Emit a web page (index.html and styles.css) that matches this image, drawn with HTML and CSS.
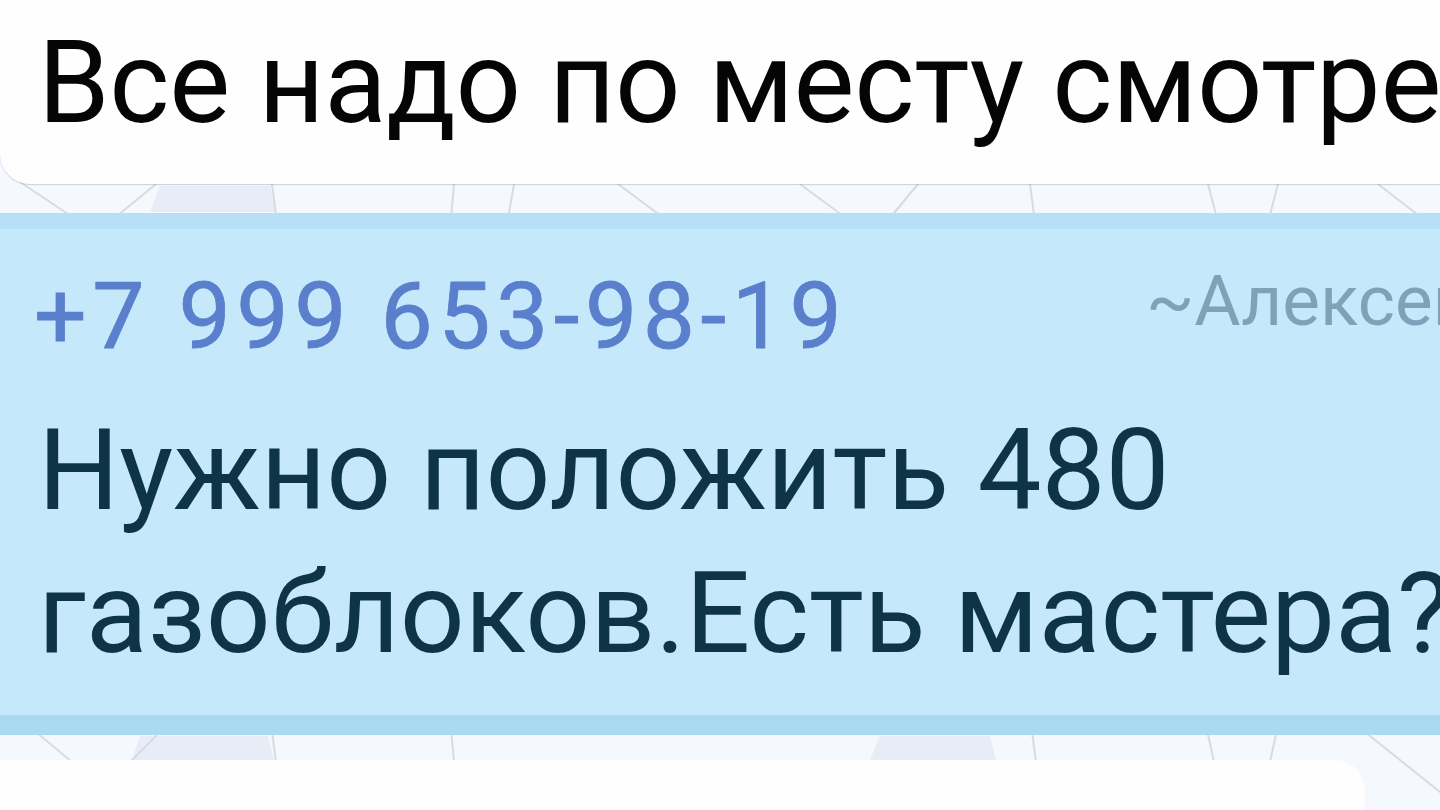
FILE: index.html
```html
<!DOCTYPE html>
<html lang="ru">
<head>
<meta charset="utf-8">
<title>Чат</title>
<link rel="stylesheet" href="styles.css">
</head>
<body>
<div class="screen">
  <svg class="doodles" width="1440" height="810" viewBox="0 0 1440 810" aria-hidden="true">
    <path class="doodle-fill" d="M160 186 L270 186 L276 212 L150 212 Z"/>
    <path class="doodle-fill" d="M140 736 L268 736 L274 760 L132 760 Z"/>
    <path class="doodle-fill" d="M880 736 L990 736 L996 760 L870 760 Z"/>
    <g class="doodle-lines">
      <path d="M20 182 L92 230"/>
      <path d="M156 184 L100 230"/>
      <path d="M272 184 L278 230"/>
      <path d="M454 184 L450 230"/>
      <path d="M514 184 L506 230"/>
      <path d="M618 184 L680 230"/>
      <path d="M800 184 L862 230"/>
      <path d="M918 184 L880 230"/>
      <path d="M1030 184 L1036 230"/>
      <path d="M1208 184 L1220 230"/>
      <path d="M1278 184 L1266 230"/>
      <path d="M1378 184 L1440 232"/>
      <path d="M0 702 L72 762"/>
      <path d="M130 762 L176 716"/>
      <path d="M270 716 L276 762"/>
      <path d="M450 716 L454 762"/>
      <path d="M1030 716 L1036 762"/>
      <path d="M1204 716 L1214 762"/>
      <path d="M1280 716 L1270 762"/>
      <path d="M1345 716 L1440 792"/>
    </g>
  </svg>

  <div class="bubble bubble-in bubble-top">
    <p class="msg-text">Все надо по месту смотреть</p>
  </div>

  <div class="bubble bubble-out">
    <div class="sender">
      <span class="phone">+7 999 653-98-19</span>
      <span class="name">~Алексей</span>
    </div>
    <p class="msg-body">Нужно положить 480<br>газоблоков.Есть мастера?</p>
  </div>

  <div class="bubble bubble-in bubble-bottom"></div>
</div>
</body>
</html>
```

FILE: styles.css
```css
* {
  box-sizing: border-box;
}

html, body {
  margin: 0;
  padding: 0;
}

body {
  background: #f3f6fb;
  font-family: Roboto, "Noto Sans", "Liberation Sans", sans-serif;
}

.screen {
  position: relative;
  width: 1440px;
  height: 810px;
  overflow: hidden;
  display: flex;
  flex-direction: column;
  background: #f5f8fc;
}

.doodles {
  position: absolute;
  left: 0;
  top: 0;
  z-index: 0;
}

.doodle-lines path {
  fill: none;
  stroke: #d6dbe6;
  stroke-width: 2;
  stroke-linecap: round;
}

.doodle-fill {
  fill: #e8ecf6;
}

.bubble {
  position: relative;
  z-index: 1;
  flex: none;
}

.bubble-in {
  background: #fefefe;
}

.bubble-top {
  width: 1540px;
  height: 184px;
  padding: 15px 0 0 38px;
  border-bottom-left-radius: 30px;
  box-shadow: 0 1px 1px rgba(120, 120, 130, 0.3);
  margin-bottom: 29px;
}

.msg-text {
  margin: 0;
  font-size: 115px;
  letter-spacing: -0.3px;
  line-height: 136px;
  color: #050505;
  white-space: nowrap;
}

.bubble-out {
  width: 1540px;
  height: 522px;
  background: #c5e9fb;
  border-top: 16px solid rgba(178, 223, 245, 0.9);
  border-bottom: 20px solid rgba(166, 216, 238, 0.9);
  padding: 35px 0 0 34px;
}

.sender {
  display: grid;
  grid-template-columns: 1112px auto;
  align-items: start;
}

.phone {
  font-size: 93px;
  font-weight: 400;
  letter-spacing: 5.5px;
  line-height: 106px;
  color: #5a7fcc;
  -webkit-text-stroke: 0.8px #5a7fcc;
  white-space: nowrap;
}

.name {
  margin-top: -5px;
  font-size: 71px;
  line-height: 83px;
  color: #7ea3b9;
  white-space: nowrap;
}

.msg-body {
  margin: 29px 0 0 4px;
  font-size: 114px;
  line-height: 143px;
  color: #0e3447;
  white-space: nowrap;
}

.bubble-bottom {
  margin-top: 25px;
  width: 1365px;
  height: 80px;
  border-top-right-radius: 30px;
}
```
